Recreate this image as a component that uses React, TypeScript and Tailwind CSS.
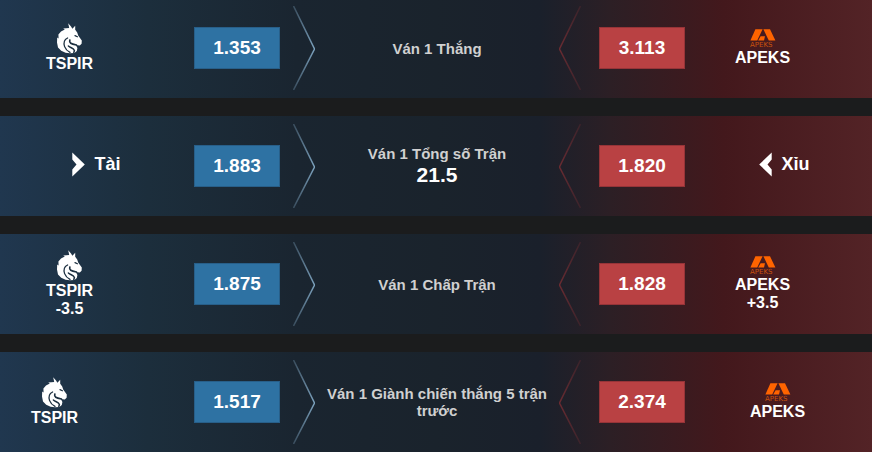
import React, { useId } from 'react'

type SideKind = 'spirit' | 'apeks' | 'over' | 'under'

interface Side {
  kind: SideKind
  name: string
  handicap?: string
  odds: string
  pad: string
}

interface Market {
  title: string
  line?: string
  home: Side
  away: Side
}

const MARKETS: Market[] = [
  {
    title: 'Ván 1 Thắng',
    home: { kind: 'spirit', name: 'TSPIR', odds: '1.353', pad: 'pr-[62px]' },
    away: { kind: 'apeks', name: 'APEKS', odds: '3.113', pad: 'pr-8' },
  },
  {
    title: 'Ván 1 Tổng số Trận',
    line: '21.5',
    home: { kind: 'over', name: 'Tài', odds: '1.883', pad: 'pr-2' },
    away: { kind: 'under', name: 'Xỉu', odds: '1.820', pad: 'pl-3' },
  },
  {
    title: 'Ván 1 Chấp Trận',
    home: { kind: 'spirit', name: 'TSPIR', handicap: '-3.5', odds: '1.875', pad: 'pr-[62px]' },
    away: { kind: 'apeks', name: 'APEKS', handicap: '+3.5', odds: '1.828', pad: 'pr-8' },
  },
  {
    title: 'Ván 1 Giành chiến thắng 5 trận trước',
    home: { kind: 'spirit', name: 'TSPIR', odds: '1.517', pad: 'pr-[92px]' },
    away: { kind: 'apeks', name: 'APEKS', odds: '2.374', pad: 'pr-0.5' },
  },
]

function SpiritLogo() {
  return (
    <svg viewBox="0 0 26 32" className="h-8 w-[26px]" aria-hidden="true">
      <path
        fill="#fff"
        d="M11.2 0.2 L14 3.4 L15.4 5.8 L18.2 2.8 L18.2 6.8 L20.2 9.4 L21.2 12.6 L24.8 17.6 L24.6 20.8 L22.8 22.4 L20.6 22.2 L18.6 21.6 L20.4 25 L19.8 28 L17.4 30 L13 30.2 L8.6 29.8 L4.2 27.8 L1 24.4 L0 19.6 L0.2 14.6 L1.6 15.4 L1.4 11.4 L4 8.4 L7.8 6.6 L6.2 5.6 L12.2 5 Z"
      />
      {/* shadow lines of the neck, jaw and eye */}
      <g fill="none" stroke="#1d3040" strokeLinecap="round">
        <path strokeWidth="1.3" d="M10.6 15 C7.4 16.6 6.4 20 7.6 23.6 C8.6 26.4 10.4 28 13 29.4" />
        <path strokeWidth="1.7" d="M12.8 17 C12 20 14 21 19.4 22" />
        <path strokeWidth="1.5" d="M11.4 23 C13.6 25 16.6 25 17.4 27.4 L16.8 29.6" />
        <path strokeWidth="1.2" d="M18 12.6 L20.4 13.8" />
      </g>
    </svg>
  )
}

function ApeksLogo() {
  return (
    <svg viewBox="0 0 26 20" className="h-5 w-[26px]" aria-hidden="true">
      <path fill="#ff6400" d="M5.4 0.2 H12.6 L7.2 11.6 H0.4 Z" />
      <path fill="#ff6400" d="M13.4 0.2 H20 L25.4 11.6 H18.8 Z" />
      <path fill="#ff6400" d="M10.6 7.2 H15 L14 11.6 H8.2 Z" />
      <text x="0" y="18" fill="#c9520e" fontSize="7" fontWeight="400" fontFamily="DejaVu Sans, sans-serif">
        APEKS
      </text>
    </svg>
  )
}

function Arrow({ flip }: { flip?: boolean }) {
  return (
    <svg viewBox="0 0 13 25" className={`h-[25px] w-[13px] ${flip ? '-scale-x-100' : ''}`} aria-hidden="true">
      <path fill="#fff" d="M0.3 0.5 L12.8 12.5 L0.3 24.5 V17.5 L4.5 12.5 L0.3 7.5 Z" />
    </svg>
  )
}

function Chevron({ color, flip }: { color: string; flip?: boolean }) {
  const id = useId()
  return (
    <svg viewBox="0 0 22 84" className={`h-[84px] w-[22px] shrink-0 ${flip ? '-scale-x-100' : ''}`} aria-hidden="true">
      <linearGradient id={id} x1="0" y1="0" x2="22" y2="0" gradientUnits="userSpaceOnUse">
        <stop offset="0" stopColor={color} stopOpacity="0.3" />
        <stop offset="1" stopColor={color} />
      </linearGradient>
      <path d="M0.5 0 L21.5 43 L0.5 84" fill="none" stroke={`url(#${id})`} strokeWidth="1.5" />
    </svg>
  )
}

function Selection({ side }: { side: Side }) {
  if (side.kind === 'over' || side.kind === 'under') {
    return (
      <div className={`flex items-center justify-center gap-[9px] pb-1 ${side.pad}`}>
        <Arrow flip={side.kind === 'under'} />
        <span className="text-[18px] leading-[20px]">{side.name}</span>
      </div>
    )
  }
  return (
    <div className={`flex flex-col items-center justify-center text-[16px] leading-[18px] ${side.pad}`}>
      {side.kind === 'spirit' ? <SpiritLogo /> : <ApeksLogo />}
      <span>{side.name}</span>
      {side.handicap && <span>{side.handicap}</span>}
    </div>
  )
}

function MarketRow({ market }: { market: Market }) {
  const { home, away } = market
  return (
    <section className="grid h-[100px] grid-cols-[minmax(0,1fr)_auto_auto_244px_auto_auto_minmax(0,1fr)] items-center bg-[linear-gradient(90deg,#20374f_0%,#1c2e3c_17%,#1a2530_34%,#1a232c_50%,#1a202b_62%,#2c1f25_70%,#43181c_83%,#532326_100%)] pl-[7px]">
      <Selection side={home} />
      <button className="mr-[13px] h-[42px] w-[86px] border border-[#285f89] bg-[#2e72a3] text-[19px]">
        {home.odds}
      </button>
      <Chevron color="#7da3bf" />
      <div className="px-2 text-center">
        <h2 className="text-[15px] leading-[17px] text-[#d0d0d0]">{market.title}</h2>
        {market.line && <p className="text-[21px] leading-[26px]">{market.line}</p>}
      </div>
      <Chevron color="#6b2b31" flip />
      <button className="ml-[18px] h-[42px] w-[86px] border border-[#963438] bg-[#b94143] text-[19px]">
        {away.odds}
      </button>
      <Selection side={away} />
    </section>
  )
}

export default function App() {
  return (
    <main className="-mt-0.5 flex flex-col gap-[18px] bg-[#1b1c1d] font-['Liberation_Sans',Arial,sans-serif] font-bold text-white">
      {MARKETS.map(m => (
        <MarketRow key={m.title} market={m} />
      ))}
    </main>
  )
}
